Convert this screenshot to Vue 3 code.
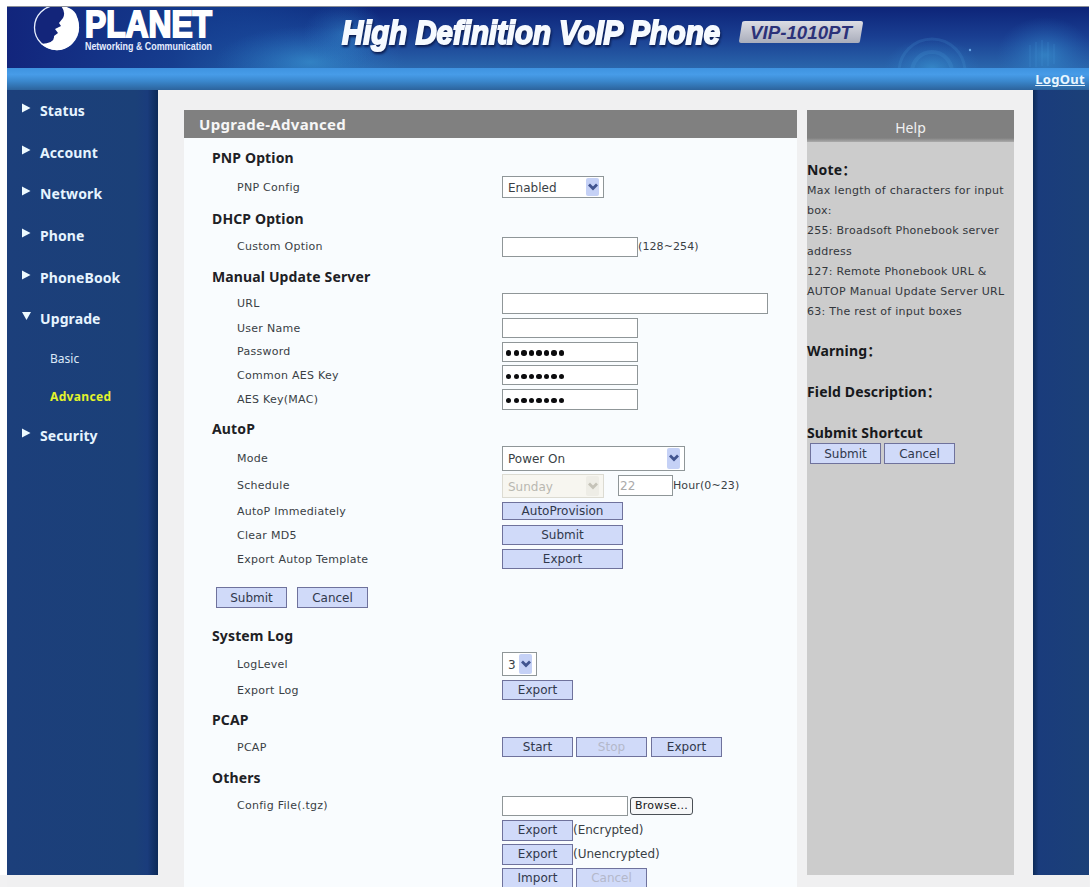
<script setup>
import { ref } from 'vue';

const menu = [
    { name: 'Status' },
    { name: 'Account' },
    { name: 'Network' },
    { name: 'Phone' },
    { name: 'PhoneBook' },
    { name: 'Upgrade', children: ['Basic', 'Advanced'] },
    { name: 'Security' }
];
const openMenu = ref('Upgrade');
const page = ref('Advanced');

// top: space above the row, h: row height
const sections = [
    {
        title: 'PNP Option', top: 8, h: 24,
        rows: [
            { label: 'PNP Config', h: 34, items: [{ type: 'select', text: 'Enabled', w: 102, h: 22 }] }
        ]
    },
    {
        title: 'DHCP Option', top: 3, h: 24,
        rows: [
            { label: 'Custom Option', h: 31, items: [{ type: 'input', w: 136, h: 20 }, { type: 'text', text: '(128~254)', range: true }] }
        ]
    },
    {
        title: 'Manual Update Server', top: 3, h: 24,
        rows: [
            { label: 'URL', top: 2, h: 25, items: [{ type: 'input', w: 266, h: 21 }] },
            { label: 'User Name', h: 24, items: [{ type: 'input', w: 136, h: 20 }] },
            { label: 'Password', h: 23, items: [{ type: 'password', w: 136, h: 20 }] },
            { label: 'Common AES Key', h: 24, items: [{ type: 'password', w: 136, h: 20 }] },
            { label: 'AES Key(MAC)', h: 24, items: [{ type: 'password', w: 136, h: 21 }] }
        ]
    },
    {
        title: 'AutoP', top: 6, h: 24,
        rows: [
            { label: 'Mode', top: 3, h: 28, items: [{ type: 'select', text: 'Power On', w: 183, h: 25 }] },
            {
                label: 'Schedule', h: 27, items: [
                    { type: 'select', text: 'Sunday', w: 102, h: 24, disabled: true },
                    { type: 'input', text: '22', w: 55, h: 21, left: 14, disabled: true },
                    { type: 'text', text: 'Hour(0~23)', range: true }
                ]
            },
            { label: 'AutoP Immediately', h: 24, items: [{ type: 'button', text: 'AutoProvision', w: 121, h: 18 }] },
            { label: 'Clear MD5', h: 24, items: [{ type: 'button', text: 'Submit', w: 121, h: 20 }] },
            { label: 'Export Autop Template', h: 24, items: [{ type: 'button', text: 'Export', w: 121, h: 20 }] }
        ],
        actions: true
    },
    {
        title: 'System Log', top: 14, h: 24,
        rows: [
            { label: 'LogLevel', top: 2, h: 28, items: [{ type: 'select', text: '3', w: 35, h: 24 }] },
            { label: 'Export Log', h: 24, items: [{ type: 'button', text: 'Export', w: 71, h: 20 }] }
        ]
    },
    {
        title: 'PCAP', top: 6, h: 24,
        rows: [
            {
                label: 'PCAP', h: 30, items: [
                    { type: 'button', text: 'Start', w: 71, h: 20 },
                    { type: 'button', text: 'Stop', w: 71, h: 20, left: 3, disabled: true },
                    { type: 'button', text: 'Export', w: 71, h: 20, left: 4 }
                ]
            }
        ]
    },
    {
        title: 'Others', top: 4, h: 24,
        rows: [
            { label: 'Config File(.tgz)', top: 3, h: 25, items: [{ type: 'input', w: 126, h: 20 }, { type: 'browse', text: 'Browse...', w: 63, h: 18, left: 2 }] },
            { label: '', h: 24, items: [{ type: 'button', text: 'Export', w: 71, h: 21 }, { type: 'text', text: '(Encrypted)' }] },
            { label: '', h: 24, items: [{ type: 'button', text: 'Export', w: 71, h: 21 }, { type: 'text', text: '(Unencrypted)' }] },
            { label: '', h: 24, items: [{ type: 'button', text: 'Import', w: 71, h: 20 }, { type: 'button', text: 'Cancel', w: 71, h: 20, left: 3, disabled: true }] }
        ]
    }
];

const notes = [
    'Max length of characters for input',
    'box:',
    '255: Broadsoft Phonebook server',
    'address',
    '127: Remote Phonebook URL &',
    'AUTOP Manual Update Server URL',
    '63: The rest of input boxes'
];

function clickMenu(item) {
    openMenu.value = item.name;
}
</script>

<template>
    <div class="screen">
        <div class="header">
            <svg class="banner" width="1082" height="61" viewBox="7 7 1082 61">
                <defs>
                    <linearGradient id="sky" x1="0" y1="0" x2="0" y2="1">
                        <stop offset="0" stop-color="#0d2478" />
                        <stop offset="0.5" stop-color="#1a3f92" />
                        <stop offset="1" stop-color="#2a66ac" />
                    </linearGradient>
                    <linearGradient id="left" x1="0" y1="0" x2="1" y2="0">
                        <stop offset="0" stop-color="#12257c" />
                        <stop offset="0.45" stop-color="#143a8c" stop-opacity="0.9" />
                        <stop offset="1" stop-color="#1b62b0" stop-opacity="0" />
                    </linearGradient>
                    <linearGradient id="plate" x1="0" y1="0" x2="0" y2="1">
                        <stop offset="0" stop-color="#dcdde4" />
                        <stop offset="1" stop-color="#a9adbb" />
                    </linearGradient>
                    <radialGradient id="glow">
                        <stop offset="0" stop-color="#3c9bd8" stop-opacity="0.75" />
                        <stop offset="1" stop-color="#2b76c4" stop-opacity="0" />
                    </radialGradient>
                </defs>
                <rect x="7" y="7" width="1082" height="61" fill="url(#sky)" />
                <rect x="7" y="7" width="370" height="61" fill="url(#left)" />
                <ellipse cx="310" cy="62" rx="95" ry="36" fill="url(#glow)" opacity="0.8" />
                <ellipse cx="345" cy="34" rx="42" ry="32" fill="url(#glow)" opacity="0.6" />
                <ellipse cx="932" cy="68" rx="48" ry="30" fill="url(#glow)" opacity="0.8" />
                <ellipse cx="1045" cy="55" rx="48" ry="38" fill="url(#glow)" opacity="0.8" />
                <g fill="none" stroke="#4b9ede" stroke-opacity="0.18">
                    <circle cx="932" cy="72" r="20" stroke-width="4" />
                    <circle cx="932" cy="72" r="33" stroke-width="3" />
                    <path d="M1030 45v22M1036 42v25M1042 40v26M1048 42v24M1054 44v20" stroke-width="1.5" />
                </g>
                <circle cx="970" cy="50" r="1.2" fill="#6aa6e6" />

                <!-- logo -->
                <circle cx="56.5" cy="27.5" r="22" fill="#13257a" stroke="#e8f0ff" stroke-width="1.3" />
                <path d="M61 6Q66 12 63 18L59 23L61 26L55 29L58 33L54 36Q55 43 41 44Q57 56 71 45Q84 31 76 14Q72 7 61 6Z" fill="#fff" />
                <text class="brand" x="85" y="36.5" font-size="37" textLength="127" lengthAdjust="spacingAndGlyphs">PLANET</text>
                <text class="slogan" x="85" y="50" font-size="11" textLength="127" lengthAdjust="spacingAndGlyphs">Networking &amp; Communication</text>

                <text class="product" x="342" y="43.5" font-size="34" textLength="378" lengthAdjust="spacingAndGlyphs">High Definition VoIP Phone</text>
                <path d="M745 21H861Q863 21 863 23L860 41Q860 43 858 43H741Q739 43 739 41L742 23Q742 21 745 21Z" fill="url(#plate)" />
                <text class="model" x="750" y="38.5" font-size="18" textLength="102" lengthAdjust="spacingAndGlyphs">VIP-1010PT</text>
            </svg>
            <div class="bar"><a class="logout" href="#">LogOut</a></div>
        </div>

        <div class="body">
            <div class="sidebar">
                <div v-for="item in menu" :key="item.name">
                    <div class="menuItem" @click="clickMenu(item)">
                        <svg width="9" height="10" viewBox="0 0 9 10">
                            <path v-if="openMenu === item.name" d="M0 1H9L4.5 9Z" fill="#eefaff" />
                            <path v-else d="M0 0.5L8.5 5L0 9.5Z" fill="#eefaff" />
                        </svg>
                        <span>{{ item.name }}</span>
                    </div>
                    <div v-if="item.children && openMenu === item.name" class="submenu">
                        <div v-for="child in item.children" :key="child" class="subItem"
                            :class="{ active: page === child }" @click="page = child"><span>{{ child }}</span></div>
                    </div>
                </div>
            </div>

            <div class="main">
                <h2>Upgrade-Advanced</h2>
                <div v-for="section in sections" :key="section.title">
                    <h3 :style="{ marginTop: section.top + 'px', height: section.h + 'px' }">{{ section.title }}</h3>
                    <div v-for="(row, i) in section.rows" :key="i" class="row"
                        :style="{ marginTop: (row.top || 0) + 'px', height: row.h + 'px' }">
                        <div class="label">{{ row.label }}</div>
                        <template v-for="(item, j) in row.items" :key="j">
                            <span v-if="item.type === 'text'" class="hint" :class="{ range: item.range }">{{ item.text }}</span>
                            <div v-else class="ctl" :class="[item.type, { disabled: item.disabled }]"
                                :style="{ width: item.w + 'px', height: item.h + 'px', marginLeft: (item.left || 0) + 'px' }">
                                <span v-if="item.type === 'password'" class="dots"><i v-for="n in 8" :key="n"></i></span>
                                <span v-else>{{ item.text }}</span>
                                <div v-if="item.type === 'select'" class="arrow">
                                    <svg width="10" height="8" viewBox="0 0 10 8">
                                        <path d="M1 1.5L5 5.5L9 1.5" fill="none" stroke="currentColor" stroke-width="2.8" />
                                    </svg>
                                </div>
                            </div>
                        </template>
                    </div>
                    <div v-if="section.actions" class="actions">
                        <div class="ctl button">Submit</div>
                        <div class="ctl button">Cancel</div>
                    </div>
                </div>
            </div>

            <div class="help">
                <div class="helpTitle">Help</div>
                <div class="helpCont">
                    <h4>Note：</h4>
                    <p v-for="line in notes" :key="line">{{ line }}</p>
                    <h4 class="warning">Warning：</h4>
                    <h4 class="field">Field Description：</h4>
                    <h4 class="shortcut">Submit Shortcut</h4>
                    <div class="helpButtons">
                        <div class="ctl button">Submit</div>
                        <div class="ctl button">Cancel</div>
                    </div>
                </div>
            </div>

            <div class="rightBar"></div>
        </div>
    </div>
</template>

<style>
body {
    margin: 0;
    background: #fff;
}
</style>

<style scoped>
.screen {
    box-sizing: border-box;
    width: 1090px;
    height: 887px;
    padding: 7px 1px 0 7px;
    overflow: hidden;
    background: linear-gradient(#fff 875px, #f1f1f2 875px);
    font-family: "DejaVu Sans", Verdana, sans-serif;
    font-size: 11px;
    color: #3a3f45;
}

/* ————————header———————— */
.header {
    box-shadow: 0 -1px 0 #8b8f98;
}

.banner {
    display: block;
}

.brand {
    font-family: "Liberation Sans", sans-serif;
    font-weight: bold;
    fill: #fff;
    stroke: #fff;
    stroke-width: 2;
}

.slogan {
    font-family: "Liberation Sans", sans-serif;
    font-weight: bold;
    fill: #e6edff;
}

.product {
    font-family: "Liberation Sans", sans-serif;
    font-weight: bold;
    font-style: italic;
    fill: #f6faff;
    stroke: #f6faff;
    stroke-width: 2;
    filter: drop-shadow(1.5px 2px 1px #0b1c50);
}

.model {
    font-family: "Liberation Sans", sans-serif;
    font-weight: bold;
    font-style: italic;
    fill: #2c3279;
}

.bar {
    display: flex;
    justify-content: flex-end;
    height: 22px;
    background: linear-gradient(#3f93e0, #479ce8 30%, #3a87cd 60%, #2c639c);
}

.logout {
    padding: 1px 4px 0 0;
    font: bold 13px/20px "Noto Sans", sans-serif;
    letter-spacing: 0.3px;
    color: #e8f6ff;
}

/* ————————body———————— */
.body {
    display: flex;
    height: 797px;
    background: #f0f0f1;
}

.sidebar {
    width: 151px;
    height: 785px;
    background: linear-gradient(90deg, #1c3f7b, #1b4078 85%, #1a3c7c 93%, #0c2a58);
}

.menuItem {
    display: flex;
    align-items: center;
    height: 41.6px;
    padding-left: 15px;
    font: bold 14px "Noto Sans", sans-serif;
    letter-spacing: 0.1px;
    color: #e6f4ff;
}

.menuItem svg {
    width: 9px;
    margin: -5px 9px 0 0;
}

.submenu {
    margin-bottom: -1px;
}

.subItem {
    display: flex;
    align-items: center;
    height: 38px;
    padding-left: 43px;
    font: 12px "Noto Sans", sans-serif;
    color: #dbe9f8;
}

.subItem.active {
    font-weight: bold;
    letter-spacing: 0.35px;
    color: #e3f32c;
}

.main {
    width: 613px;
    margin: 20px 10px 0 26px;
    background: #f9fcfe;
}

.main h2 {
    height: 28px;
    margin: 0;
    padding-left: 15px;
    background: #808080;
    font: bold 15px/29px "Noto Sans", sans-serif;
    letter-spacing: 0.3px;
    color: #f6f6f6;
}

.main h3 {
    margin: 0;
    padding-left: 28px;
    font: bold 14px/24px "Noto Sans", sans-serif;
    letter-spacing: 0.13px;
    color: #1e2125;
}

.row {
    display: flex;
    align-items: center;
}

.label {
    width: 265px;
    padding-left: 53px;
    white-space: nowrap;
    letter-spacing: 0.27px;
}

/* ————————controls———————— */
.ctl {
    box-sizing: border-box;
    display: flex;
    align-items: center;
    flex-shrink: 0;
    border: 1px solid #8f9698;
    background: #fff;
}

.button {
    justify-content: center;
    width: 71px;
    height: 21px;
    border-color: #6f729c;
    background: #d0daf9;
    font-size: 12px;
    color: #30384c;
}

.button.disabled {
    color: #b4b8ca;
}

.select {
    justify-content: space-between;
    padding: 1px 4px 1px 5px;
    font-size: 12px;
}

.select.disabled {
    border-color: #dcdbd2;
    background: #f7f6f0;
    color: #b9b8b0;
}

.select span {
    padding-top: 2px;
}

.arrow {
    display: flex;
    align-items: center;
    justify-content: center;
    width: 13px;
    height: 100%;
    border-radius: 2px;
    background: #c5d1f6;
    color: #41548f;
}

.disabled .arrow {
    background: #eeede6;
    color: #c5c3b8;
}

.input {
    padding-left: 1px;
    font-size: 12px;
}

.input.disabled {
    color: #aaa;
}

.password {
    padding: 3px 0 0 3px;
}

.dots {
    display: flex;
    gap: 2.2px;
}

.dots i {
    width: 5.4px;
    height: 5.4px;
    border-radius: 50%;
    background: #0c0c0e;
}

.browse {
    justify-content: center;
    border: 1.5px solid #4b5056;
    border-radius: 3px;
    background: #f6f7f8;
    letter-spacing: 0.3px;
    color: #16181b;
}

.hint {
    font-size: 12px;
}

.hint.range {
    font-size: 11px;
    letter-spacing: 0.1px;
}

.actions {
    display: flex;
    gap: 10px;
    align-items: center;
    height: 25px;
    margin-top: 14px;
    padding-left: 32px;
}

/* ————————help———————— */
.help {
    width: 207px;
    height: 765px;
    margin-top: 20px;
    background: #ccc;
    color: #33373c;
}

.helpTitle {
    height: 32px;
    background: linear-gradient(#808080 28px, #aaa);
    font: 14px/35px "Noto Sans", sans-serif;
    text-align: center;
    color: #f0f0f0;
}

.helpCont {
    padding-top: 17px;
}

.helpCont h4 {
    margin: 0;
    font: bold 14px/22px "Noto Sans", "Noto Sans CJK SC", sans-serif;
    letter-spacing: 0.15px;
    color: #17191c;
}

.helpCont p {
    margin: 0;
    line-height: 20.2px;
    letter-spacing: 0.27px;
    white-space: nowrap;
}

.helpCont .warning {
    margin-top: 18px;
}

.helpCont .field {
    margin-top: 19px;
}

.helpCont .shortcut {
    margin-top: 20px;
    line-height: 20px;
}

.helpButtons {
    display: flex;
    gap: 3px;
    padding-left: 3px;
}

.rightBar {
    width: 56px;
    height: 785px;
    margin-left: 19px;
    background: linear-gradient(90deg, #0c2a58, #1a3c7c 10%, #1b4078);
}
</style>
